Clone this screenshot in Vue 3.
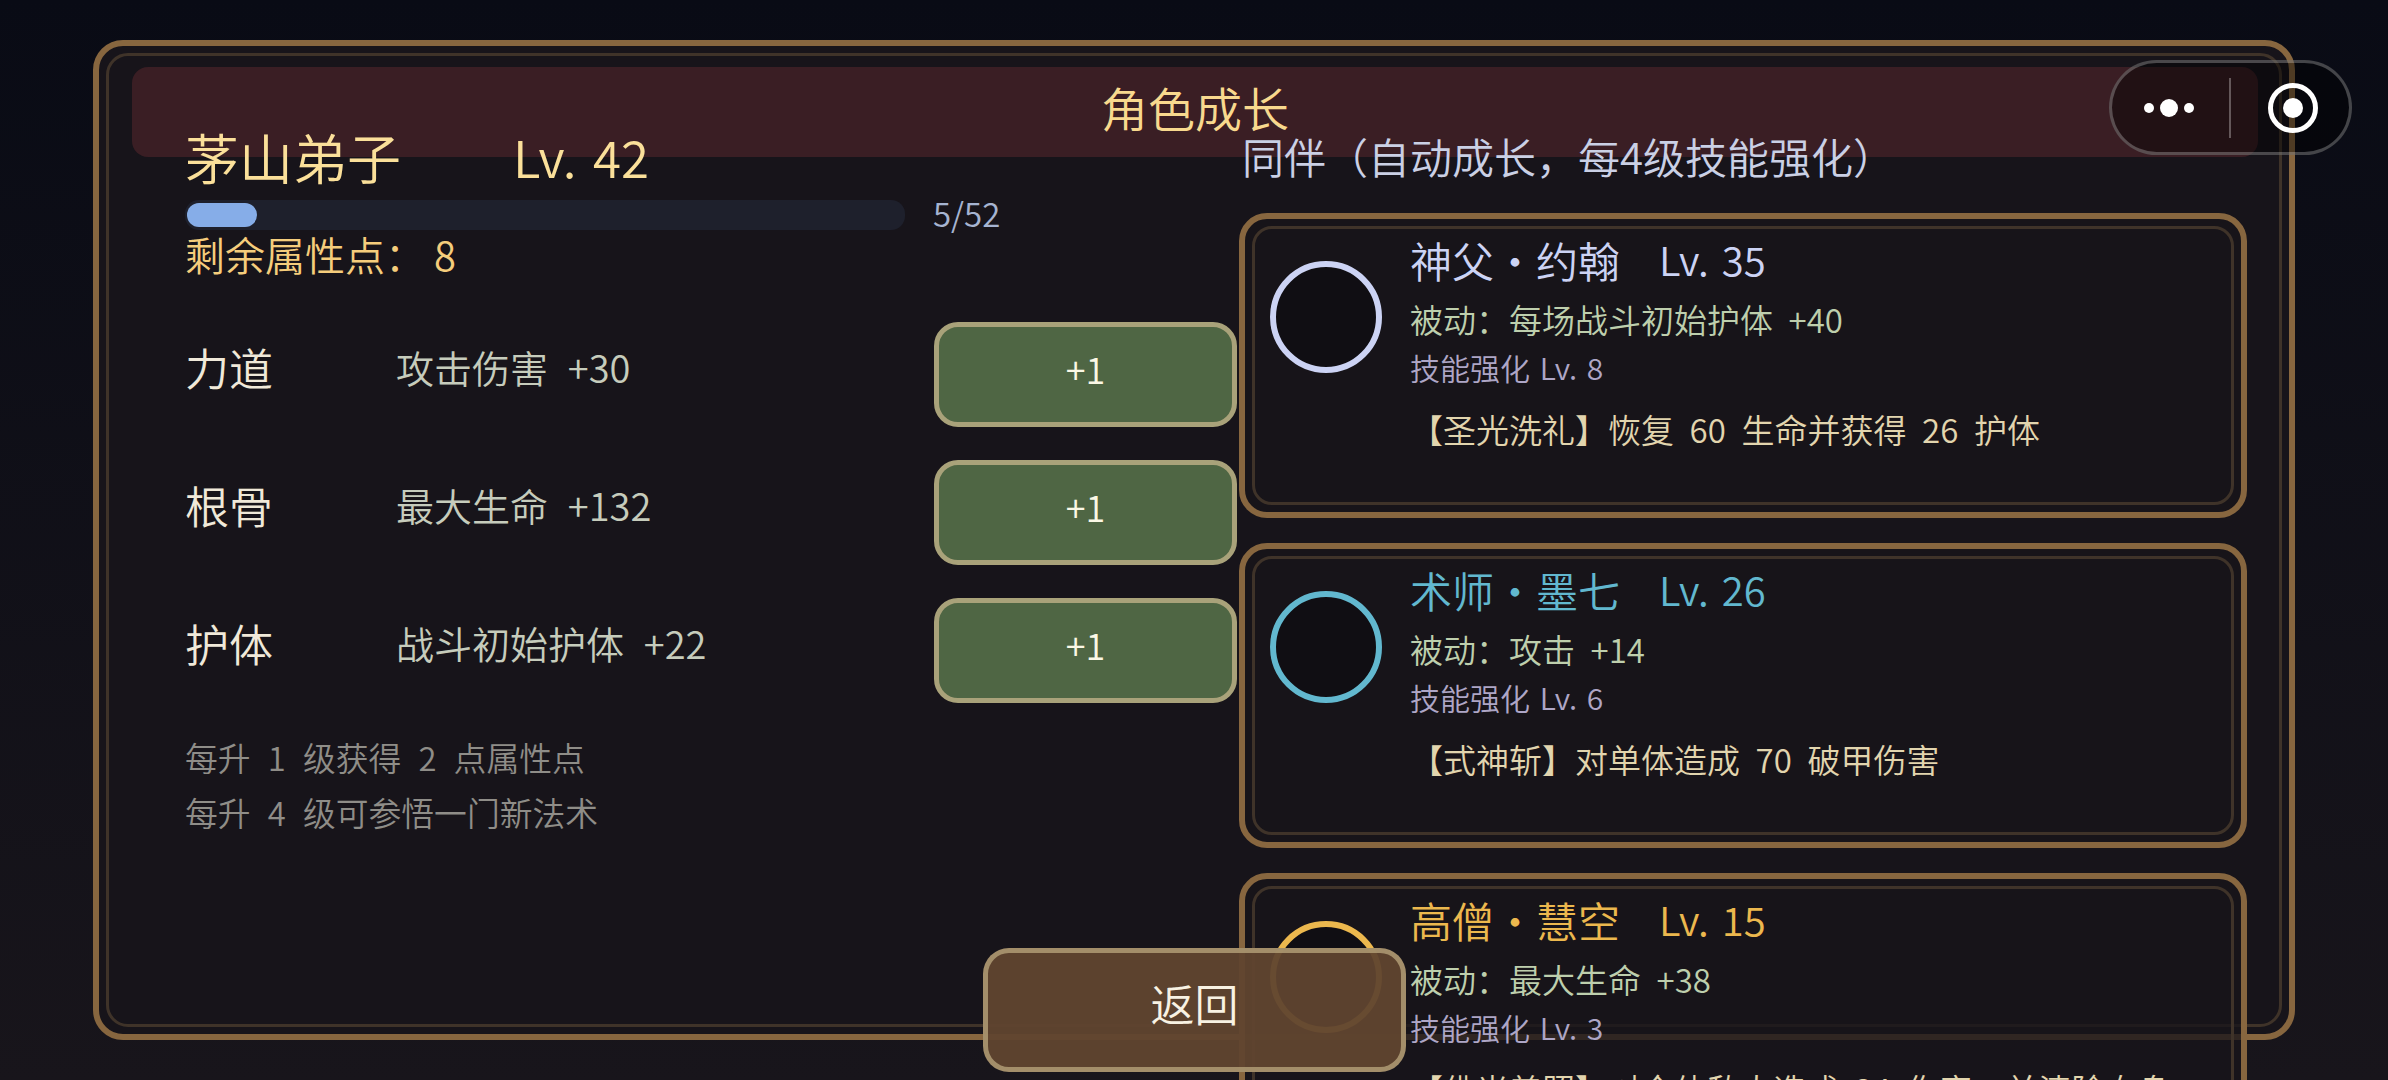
<template>
  <div class="screen">
    <div class="panel">
      <div class="panel_title">角色成长</div>
    </div>

    <div class="content">
      <section class="hero">
        <div class="hero_head">
          <span class="hero_name">茅山弟子</span>
          <span class="hero_lv">Lv. 42</span>
        </div>
        <div class="exp">
          <div class="exp_track"><div class="exp_fill"></div></div>
          <span class="exp_text">5/52</span>
        </div>
        <div class="points">剩余属性点： 8</div>

        <div class="stats">
          <div v-for="stat in stats" :key="stat.name" class="stat">
            <div class="stat_text">
              <span class="stat_name">{{ stat.name }}</span>
              <span class="stat_desc">{{ stat.desc }}</span>
            </div>
            <button class="stat_btn">+1</button>
          </div>
        </div>

        <p class="hint first">每升 1 级获得 2 点属性点</p>
        <p class="hint">每升 4 级可参悟一门新法术</p>
      </section>

      <section class="team">
        <div class="team_title">同伴（自动成长，每4级技能强化）</div>
        <div class="team_list">
          <div v-for="mate in mates" :key="mate.name" class="card">
            <div class="avatar" :style="{ borderColor: mate.color }"></div>
            <div class="card_body">
              <div class="card_head" :style="{ color: mate.color }">
                <span class="card_name">{{ mate.name }}</span>
                <span class="card_lv">Lv. {{ mate.lv }}</span>
              </div>
              <div class="card_passive">{{ mate.passive }}</div>
              <div class="card_skill">技能强化 Lv. {{ mate.skill }}</div>
              <div class="card_desc">{{ mate.desc }}</div>
            </div>
          </div>
        </div>
      </section>
    </div>

    <button class="back">返回</button>

    <div class="capsule">
      <svg class="capsule_more" width="62" height="26" viewBox="0 0 62 26">
        <circle cx="11" cy="13" r="5" fill="#fff" />
        <circle cx="31" cy="13" r="9" fill="#fff" />
        <circle cx="51" cy="13" r="5" fill="#fff" />
      </svg>
      <span class="capsule_line"></span>
      <svg class="capsule_close" width="50" height="50" viewBox="0 0 50 50">
        <circle cx="25" cy="25" r="22.5" fill="none" stroke="#fff" stroke-width="5" />
        <circle cx="25" cy="25" r="10" fill="#fff" />
      </svg>
    </div>
  </div>
</template>

<script setup>
const stats = [
  { name: '力道', desc: '攻击伤害 +30' },
  { name: '根骨', desc: '最大生命 +132' },
  { name: '护体', desc: '战斗初始护体 +22' },
];

const mates = [
  {
    name: '神父・约翰',
    lv: 35,
    color: '#ccd3f4',
    passive: '被动：每场战斗初始护体 +40',
    skill: 8,
    desc: '【圣光洗礼】恢复 60 生命并获得 26 护体',
  },
  {
    name: '术师・墨七',
    lv: 26,
    color: '#62b8cf',
    passive: '被动：攻击 +14',
    skill: 6,
    desc: '【式神斩】对单体造成 70 破甲伤害',
  },
  {
    name: '高僧・慧空',
    lv: 15,
    color: '#ecb84e',
    passive: '被动：最大生命 +38',
    skill: 3,
    desc: '【佛光普照】对全体敌人造成 34 伤害，并清除自身',
  },
];
</script>

<style>
html,
body {
  margin: 0;
  background: #18151b;
}
</style>

<style scoped>
.screen {
  position: relative;
  width: 2388px;
  height: 1080px;
  overflow: hidden;
  background: linear-gradient(180deg, #090b15 0%, #18151b 100%);
  font-family: "Noto Sans CJK SC", "Noto Sans", sans-serif;
  font-weight: 350;
}

.panel {
  position: absolute;
  left: 93px;
  top: 40px;
  width: 2202px;
  height: 1000px;
  box-sizing: border-box;
  padding: 21px 31px 0 33px;
  background: #17141a;
  border: 6px solid #87663f;
  border-radius: 30px;
}

.panel::before {
  content: "";
  position: absolute;
  inset: 7px;
  border: 3px solid #3f3329;
  border-radius: 22px;
}

.panel_title {
  height: 90px;
  line-height: 79px;
  text-align: center;
  font-size: 47px;
  color: #f8d98e;
  background: #3a1e24;
  border-radius: 16px;
}

.content {
  position: relative;
  display: flex;
  gap: 2px;
  padding: 130px 0 0 185px;
}

/* left column */
.hero {
  width: 1052px;
  flex-shrink: 0;
}

.hero_head {
  display: flex;
  align-items: center;
  height: 60px;
  padding-bottom: 8px;
  box-sizing: border-box;
  color: #fbe09a;
}

.hero_name {
  width: 328px;
  font-size: 54px;
}

.hero_lv {
  font-size: 51px;
  word-spacing: 5px;
}

.exp {
  display: flex;
  align-items: center;
  gap: 28px;
  height: 30px;
  margin-top: 10px;
}

.exp_track {
  width: 720px;
  height: 30px;
  box-sizing: border-box;
  padding: 3px 2px;
  background: #1e202c;
  border-radius: 14px;
}

.exp_fill {
  width: 70px;
  height: 24px;
  background: #86ade8;
  border-radius: 12px;
}

.exp_text {
  line-height: 26px;
  padding-bottom: 4px;
  font-size: 33px;
  color: #a6b4d1;
}

.points {
  height: 50px;
  line-height: 42px;
  margin-top: 3px;
  font-size: 40px;
  color: #f5cd7c;
}

.stats {
  display: flex;
  flex-direction: column;
  gap: 33px;
  margin-top: 39px;
}

.stat {
  display: flex;
  align-items: center;
  height: 105px;
}

.stat_text {
  display: flex;
  align-items: center;
  flex: 1;
  padding-bottom: 16px;
}

.stat_name {
  width: 211px;
  font-size: 44px;
  color: #f0e9d9;
}

.stat_desc {
  font-size: 38px;
  word-spacing: 0.3em;
  color: #c6ccbc;
}

.stat_btn {
  width: 303px;
  height: 105px;
  padding: 0 0 14px;
  font: inherit;
  font-size: 36px;
  color: #fbf8e6;
  background: #4f6644;
  border: 5px solid #a9a27a;
  border-radius: 24px;
}

.hint {
  height: 55px;
  line-height: 55px;
  margin: 0;
  font-size: 32.8px;
  word-spacing: 0.3em;
  color: #8f8d88;
}

.hint.first {
  margin-top: 26px;
}

/* right column */
.team {
  width: 1008px;
  flex-shrink: 0;
}

.team_title {
  height: 60px;
  line-height: 52px;
  padding-left: 3px;
  font-size: 42px;
  color: #cad0e5;
}

.team_list {
  display: flex;
  flex-direction: column;
  gap: 25px;
  margin-top: 23px;
}

.card {
  position: relative;
  display: flex;
  flex-shrink: 0;
  height: 305px;
  box-sizing: border-box;
  padding: 10px 0 0 25px;
  background: rgba(23, 20, 26, 0.78);
  border: 6px solid #87663f;
  border-radius: 28px;
}

.card::before {
  content: "";
  position: absolute;
  inset: 7px;
  border: 3px solid #3f3329;
  border-radius: 20px;
}

.avatar {
  width: 112px;
  height: 112px;
  margin-top: 32px;
  box-sizing: border-box;
  background: #100e13;
  border: 6px solid;
  border-radius: 50%;
}

.card_body {
  position: relative;
  margin-left: 28px;
}

.card_head {
  display: flex;
  align-items: center;
  height: 60px;
}

.card_name {
  width: 249px;
  font-size: 42px;
}

.card_lv {
  font-size: 40px;
  word-spacing: 4px;
}

.card_passive {
  height: 48px;
  line-height: 48px;
  margin-top: 6px;
  font-size: 33px;
  word-spacing: 0.25em;
  color: #becfad;
}

.card_skill {
  height: 48px;
  line-height: 48px;
  font-size: 30px;
  word-spacing: 0.1em;
  color: #aea6c6;
}

.card_desc {
  height: 48px;
  line-height: 48px;
  margin-top: 14px;
  font-size: 33px;
  word-spacing: 0.25em;
  white-space: nowrap;
  color: #e2d5ae;
}

/* overlays */
.back {
  position: absolute;
  left: 983px;
  top: 948px;
  width: 423px;
  height: 124px;
  padding: 0 0 14px;
  font: inherit;
  font-size: 44px;
  color: #f8f2e3;
  background: rgba(96, 68, 47, 0.95);
  border: 5px solid rgba(176, 156, 118, 0.85);
  border-radius: 26px;
}

.capsule {
  position: absolute;
  left: 2109px;
  top: 60px;
  display: flex;
  align-items: center;
  width: 243px;
  height: 95px;
  box-sizing: border-box;
  background: rgba(0, 0, 0, 0.42);
  border: 3px solid rgba(255, 255, 255, 0.25);
  border-radius: 48px;
}

.capsule_more {
  margin-left: 26px;
}

.capsule_line {
  width: 2px;
  height: 60px;
  margin-left: 29px;
  background: rgba(255, 255, 255, 0.3);
}

.capsule_close {
  margin-left: 37px;
}
</style>
